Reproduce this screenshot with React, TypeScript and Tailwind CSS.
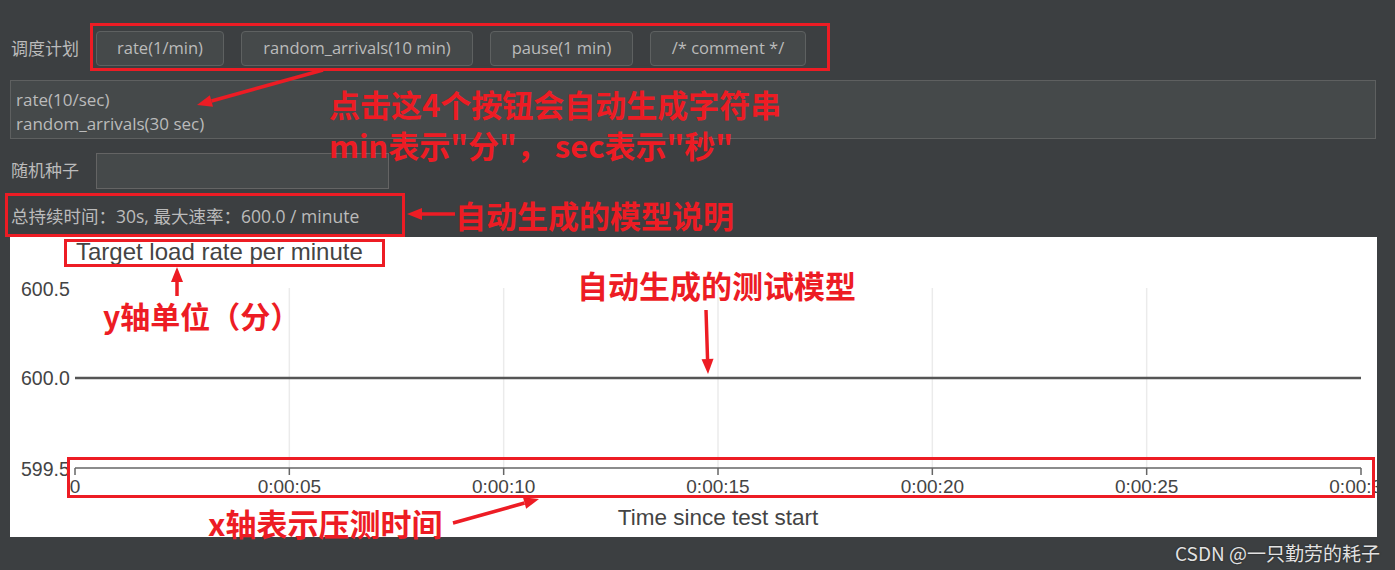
import React from "react";

const buttons = [
  { label: "rate(1/min)", w: "w-[128px]" },
  { label: "random_arrivals(10 min)", w: "w-[232px]" },
  { label: "pause(1 min)", w: "w-[143px]" },
  { label: "/* comment */", w: "w-[156px]" },
];

// chart coordinates are local to the white panel
const X0 = 65;
const X1 = 1351;
const ticks = [0, 5, 10, 15, 20, 25, 30].map((s) => ({
  s,
  x: X0 + ((X1 - X0) * s) / 30,
  label: s === 0 ? "0" : `0:00:${String(s).padStart(2, "0")}`,
}));

const Chart = () => (
  <svg width="1367" height="300" className="block">
    <g fontFamily="'Liberation Sans', Arial, sans-serif" fill="#444">
      <text x="66" y="23" fontSize="24">
        Target load rate per minute
      </text>
      <text x="11" y="59" fontSize="19.5">600.5</text>
      <text x="11" y="148" fontSize="19.5">600.0</text>
      <text x="11" y="239" fontSize="19.5">599.5</text>
      {ticks.map((t) => (
        <text key={t.s} x={t.x} y="256" fontSize="19" textAnchor="middle">
          {t.label}
        </text>
      ))}
      <text x="708" y="288" fontSize="22.5" textAnchor="middle">
        Time since test start
      </text>
    </g>
    {ticks.slice(1, 6).map((t) => (
      <line key={t.s} x1={t.x} x2={t.x} y1="51" y2="231" stroke="#ebebeb" strokeWidth="1.5" />
    ))}
    <line x1={X0} x2={X1} y1="141" y2="141" stroke="#555" strokeWidth="2.5" />
    <line x1={X0} x2={X1} y1="231" y2="231" stroke="#666" strokeWidth="1.5" />
    {ticks.map((t) => (
      <line key={t.s} x1={t.x} x2={t.x} y1="231" y2="238" stroke="#666" strokeWidth="1.5" />
    ))}
  </svg>
);

const Arrow = ({ x1, y1, x2, y2 }: { x1: number; y1: number; x2: number; y2: number }) => {
  const a = Math.atan2(y2 - y1, x2 - x1);
  const len = 15;
  const half = 6;
  const bx = x2 - len * Math.cos(a);
  const by = y2 - len * Math.sin(a);
  const px = -Math.sin(a) * half;
  const py = Math.cos(a) * half;
  return (
    <g>
      <line x1={x1} y1={y1} x2={bx} y2={by} stroke="#ed1c24" strokeWidth="3.5" />
      <polygon
        points={`${x2},${y2} ${bx + px},${by + py} ${bx - px},${by - py}`}
        fill="#ed1c24"
      />
    </g>
  );
};

const Note = ({ className, children }: { className: string; children: React.ReactNode }) => (
  <div
    className={`absolute whitespace-nowrap font-['Noto_Sans_CJK_SC',sans-serif] font-bold text-[#ed1c24] leading-none ${className}`}
  >
    {children}
  </div>
);

export default function App() {
  return (
    <div className="relative w-[1395px] h-[570px] overflow-hidden bg-[#3c3f41] text-[#bbbbbb] font-['Open_Sans','Noto_Sans_CJK_SC',sans-serif]">
      <div className="flex flex-col pt-[31px]">
        <div className="flex items-center h-[35px] pl-[11px]">
          <span className="w-[85px] text-[17px]">调度计划</span>
          <div className="flex gap-[17px]">
            {buttons.map((b) => (
              <button
                key={b.label}
                className={`${b.w} h-[35px] rounded-[4px] border border-[#5e6161] bg-[#45494a] text-[16.5px] text-[#bbbbbb]`}
              >
                {b.label}
              </button>
            ))}
          </div>
        </div>

        <div className="mt-[14px] ml-[10px] w-[1366px] h-[59px] border border-[#5e6060] bg-[#45494a] pl-[5px] pt-[7px] text-[17px] leading-[24px]">
          <div>rate(10/sec)</div>
          <div>random_arrivals(30 sec)</div>
        </div>

        <div className="mt-[14px] flex items-center h-[36px] pl-[11px]">
          <span className="w-[85px] text-[17px]">随机种子</span>
          <div className="w-[293px] h-[36px] border border-[#646464] bg-[#45494a]" />
        </div>

        <div className="h-[48px] pt-[16px] pl-[11px] text-[17.5px] leading-[22px]">
          总持续时间：30s, 最大速率：600.0 / minute
        </div>

        <div className="ml-[10px] w-[1367px] h-[300px] bg-white overflow-hidden">
          <Chart />
        </div>
      </div>

      {/* annotations */}
      <div className="absolute left-[90px] top-[23px] w-[740px] h-[48px] border-[3px] border-[#ed1c24]" />
      <div className="absolute left-[5px] top-[193px] w-[400px] h-[44px] border-[3px] border-[#ed1c24]" />
      <div className="absolute left-[64px] top-[239px] w-[321px] h-[28px] border-[3px] border-[#ed1c24]" />
      <div className="absolute left-[67px] top-[457px] w-[1308px] h-[41px] border-[3px] border-[#ed1c24]" />

      <Note className="left-[329px] top-[88px] text-[31px]">点击这4个按钮会自动生成字符串</Note>
      <Note className="left-[329px] top-[129px] text-[31px]">min表示"分"，&nbsp;sec表示"秒"</Note>
      <Note className="left-[455px] top-[199px] text-[31px]">自动生成的模型说明</Note>
      <Note className="left-[103px] top-[300px] text-[30px]">y轴单位（分）</Note>
      <Note className="left-[577px] top-[269px] text-[31px]">自动生成的测试模型</Note>
      <Note className="left-[208px] top-[507px] text-[31px]">x轴表示压测时间</Note>

      <svg className="absolute inset-0 pointer-events-none" width="1395" height="570">
        <Arrow x1={323} y1={70} x2={197} y2={105} />
        <Arrow x1={455} y1={214} x2={407} y2={214} />
        <Arrow x1={177} y1={296} x2={177} y2={267} />
        <Arrow x1={706} y1={310} x2={708} y2={374} />
        <Arrow x1={453} y1={523} x2={539} y2={499} />
      </svg>

      <div className="absolute right-[15px] bottom-[8px] text-[19px] leading-none text-[#e2e2e2] font-['Noto_Sans_CJK_SC',sans-serif] [text-shadow:0_0_2px_rgba(0,0,0,0.6)]">
        CSDN @一只勤劳的耗子
      </div>
    </div>
  );
}
